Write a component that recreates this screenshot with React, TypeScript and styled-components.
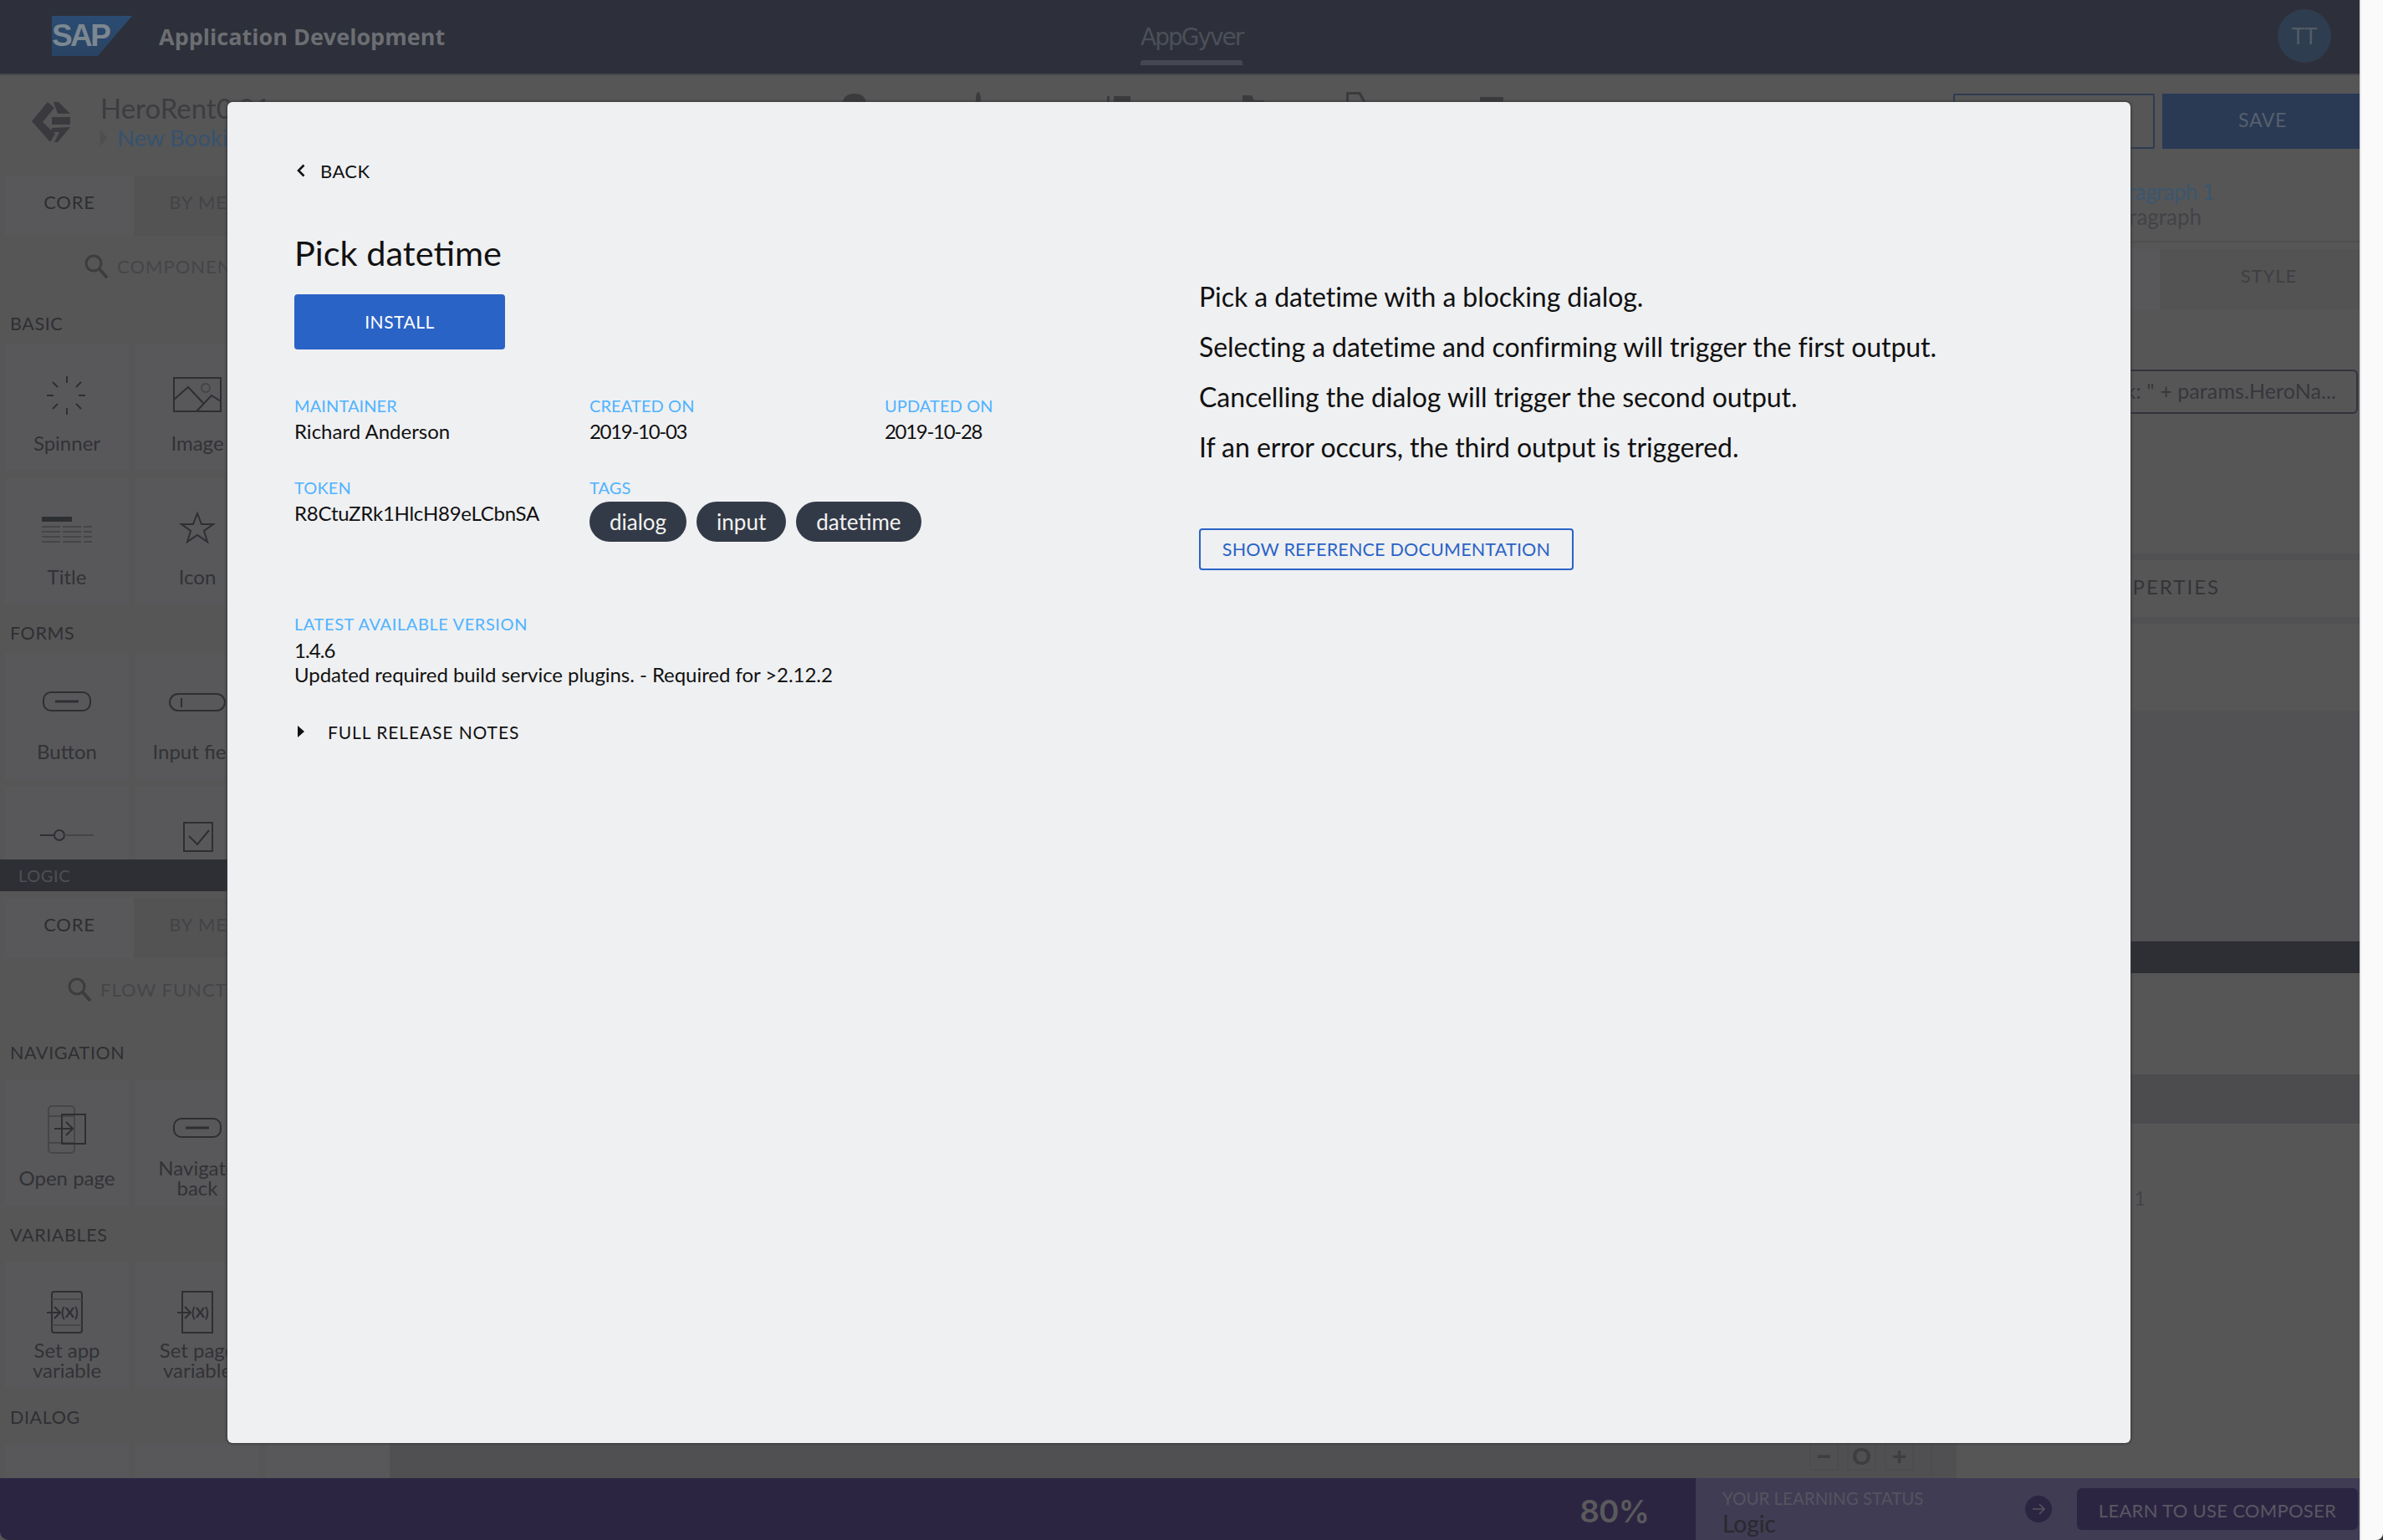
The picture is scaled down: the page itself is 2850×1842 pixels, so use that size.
import styled, { createGlobalStyle } from 'styled-components';

const GlobalStyle = createGlobalStyle`
  html, body {
    margin: 0;
    padding: 0;
    background: #333;
  }

  * {
    box-sizing: border-box;
  }
`;

const Shell = styled.div`
  position: relative;
  display: flex;
  width: 2850px;
  height: 1842px;
  overflow: hidden;
  font-family: Lato, "Liberation Sans", sans-serif;
`;

const Main = styled.div`
  display: flex;
  flex-direction: column;
  width: 2822px;
  background: #565657;
`;

const ScrollStrip = styled.div`
  flex: 1;
  background: #fafafa;
  border-left: 2px solid #e6e6e6;
  border-bottom-right-radius: 8px;
`;

/* top bar */
const Header = styled.header`
  display: grid;
  grid-template-columns: 1302px auto 1fr;
  align-items: center;
  flex: 0 0 88px;
  padding: 0 34px 2px 62px;
  background: #2d303a;
  border-bottom: 2px solid #48484b;
`;

const HeaderBrand = styled.div`
  display: flex;
  align-items: center;
`;

const SapLogo = styled.div`
  display: flex;
  align-items: center;
  width: 96px;
  height: 48px;
  background: linear-gradient(180deg, #2b4c72, #294363);
  clip-path: polygon(0 0, 100% 0, 57% 100%, 0 100%);
  color: #7c8791;
  font-family: "Liberation Sans", sans-serif;
  font-size: 37px;
  font-weight: 700;
  letter-spacing: -2.6px;
`;

const ProductName = styled.div`
  margin-left: 32px;
  color: #6c6e73;
  font-family: "Open Sans", sans-serif;
  font-size: 27px;
  font-weight: 700;
`;

const HeaderTab = styled.div`
  position: relative;
  display: flex;
  justify-content: center;
  align-items: center;
  height: 86px;
  padding-top: 2px;
  color: #4c4f59;
  font-family: "DejaVu Sans", sans-serif;
  font-size: 28px;
  letter-spacing: -2px;

  &::after {
    content: '';
    position: absolute;
    left: 0;
    right: 0;
    top: 72px;
    height: 6px;
    border-radius: 3px 3px 0 0;
    background: #454853;
  }
`;

const Avatar = styled.div`
  display: flex;
  justify-content: center;
  align-items: center;
  justify-self: end;
  width: 64px;
  height: 64px;
  border-radius: 50%;
  background: #2e3d4f;
  color: #525c66;
  font-size: 26px;
`;

/* project toolbar */
const Toolbar = styled.div`
  display: flex;
  flex: 0 0 112px;
`;

const Brand = styled.div`
  display: flex;
  flex: 0 0 1008px;
  padding: 32px 0 0 38px;
`;

const BrandText = styled.div`
  margin: -11px 0 0 36px;
`;

const BrandName = styled.div`
  color: #3c3c40;
  font-size: 33px;
  line-height: 36px;
`;

const Breadcrumb = styled.div`
  display: flex;
  align-items: center;
  gap: 12px;
  margin-top: 3px;
  color: #36526e;
  font-size: 27.5px;
  line-height: 30px;

  &::before {
    content: '';
    border-left: 8px solid #4e4e50;
    border-top: 10px solid transparent;
    border-bottom: 10px solid transparent;
  }
`;

const ToolIcon = styled.svg<{ $gap: number }>`
  flex: none;
  width: 40px;
  height: 30px;
  margin: 20px 0 0 ${props => props.$gap}px;
  fill: #3b3b3e;
`;

const Actions = styled.div`
  display: flex;
  gap: 9px;
  margin: 22px 0 0 auto;
  height: 66px;
`;

const OutlineAction = styled.div`
  width: 241px;
  border: 2px solid #2e3a50;
  border-radius: 2px;
`;

const SaveAction = styled.div`
  display: flex;
  justify-content: center;
  align-items: center;
  width: 236px;
  padding: 0 0 5px 4px;
  background: #2a3a55;
  color: #56606c;
  font-size: 23px;
  letter-spacing: 0.6px;
`;

/* work area */
const Panes = styled.div`
  display: flex;
  flex: 1;
  min-height: 0;
`;

const Sidebar = styled.aside`
  display: flex;
  flex-direction: column;
  flex: 0 0 466px;
`;

const SidebarSection = styled.section<{ $height?: number }>`
  flex: ${props => (props.$height ? `0 0 ${props.$height}px` : '1')};
  min-height: 0;
  padding: 8px 0 0 6px;
  overflow: hidden;
`;

const Tabs = styled.div`
  display: flex;
  height: 72px;
`;

const Tab = styled.div<{ $active?: boolean }>`
  display: flex;
  justify-content: center;
  align-items: center;
  width: 154px;
  padding-bottom: 10px;
  background: ${props => (props.$active ? '#58585a' : '#535354')};
  color: ${props => (props.$active ? '#2e2e30' : '#434346')};
  font-size: 22px;
  letter-spacing: 0.8px;
`;

const SearchRow = styled.div<{ $inset: number; $height: number }>`
  display: flex;
  align-items: center;
  gap: 10px;
  height: ${props => props.$height}px;
  padding-left: ${props => props.$inset}px;
  color: #454548;
  font-size: 22px;
  letter-spacing: 1px;
  white-space: nowrap;
`;

const SectionLabel = styled.div<{ $height: number; $top: number }>`
  height: ${props => props.$height}px;
  padding: ${props => props.$top}px 0 0 6px;
  color: #2f2f32;
  font-size: 21.5px;
  line-height: 20px;
  letter-spacing: 0.6px;
`;

const TileGrid = styled.div`
  display: grid;
  grid-template-columns: repeat(3, 148px);
  gap: 9px 8px;
`;

const Tile = styled.div`
  display: flex;
  flex-direction: column;
  align-items: center;
  height: 151px;
  padding-top: 24px;
  background: #58585a;
`;

const TileIcon = styled.svg`
  flex: 0 0 70px;
  width: 100px;
  fill: none;
  stroke: #2e2f33;
  stroke-width: 2;
`;

const TileText = styled.div`
  display: flex;
  align-items: center;
  height: 52px;
  margin-top: -2px;
  color: #323236;
  font-size: 24px;
  line-height: 24px;
  text-align: center;
  white-space: pre-line;
`;

const LogicBar = styled.div`
  flex: 0 0 38px;
  padding-left: 22px;
  background: #2e2f35;
  color: #4e4f54;
  font-size: 20px;
  line-height: 38px;
  letter-spacing: 0.6px;
`;

const Canvas = styled.main`
  display: flex;
  flex: 1;
  justify-content: flex-end;
  align-items: flex-end;
  background: #505052;
  padding-bottom: 1px;
`;

const ZoomControls = styled.div`
  display: flex;
  gap: 10px;
  margin-right: 29px;
  padding: 0 20px 8px 0;
  border-right: 2px solid #4c4c4e;
`;

const ZoomButton = styled.div`
  display: flex;
  justify-content: center;
  align-items: center;
  width: 35px;
  height: 70px;
  padding-top: 36px;
  border: 2px solid #4c4c4e;
  color: #3e3e40;
  font-family: "Liberation Sans", sans-serif;
  font-size: 30px;
  font-weight: 700;
`;

const Inspector = styled.aside`
  display: flex;
  flex-direction: column;
  flex: 0 0 482px;
`;

const InspectorHead = styled.div`
  flex: 0 0 88px;
  padding: 12px 0 0 178px;
  border-bottom: 2px solid #4f4f51;
  color: #434346;
  font-size: 26px;
  line-height: 30px;
`;

const InspectorLink = styled.div`
  color: #3b566e;
  letter-spacing: -0.6px;
`;

const InspectorTabs = styled.div`
  display: flex;
  flex: 0 0 72px;
  margin-top: 8px;
`;

const InspectorTab = styled.div<{ $active?: boolean }>`
  display: flex;
  flex: 0 0 ${props => (props.$active ? 243 : 239)}px;
  justify-content: center;
  align-items: center;
  padding: 0 0 10px 22px;
  background: ${props => (props.$active ? '#58585a' : '#535354')};
  color: #3f3f42;
  font-size: 22px;
  letter-spacing: 1px;
`;

const BindingInput = styled.div`
  display: flex;
  justify-content: flex-end;
  align-items: center;
  flex: 0 0 53px;
  margin: 72px 2px 0 0;
  padding: 0 24px 3px 0;
  border: 2px solid #33343c;
  border-radius: 6px;
  color: #36373b;
  font-size: 25px;
  letter-spacing: 0.1px;
  white-space: nowrap;
`;

const FieldNote = styled.div<{ $height: number }>`
  display: flex;
  flex: 0 0 ${props => props.$height}px;
  align-items: center;
  padding-left: 100px;
  color: #444447;
  font-size: 24px;
`;

const PanelHeading = styled.div`
  display: flex;
  align-items: center;
  flex: 0 0 84px;
  padding: 0 0 5px 156px;
  border-top: 8px solid #515153;
  border-bottom: 8px solid #515153;
  color: #343438;
  font-size: 24px;
  letter-spacing: 2px;
`;

const DarkerArea = styled.div`
  flex: 0 0 276px;
  margin-top: 104px;
  background: #525254;
`;

const PanelBar = styled.div<{ $height: number; $color: string }>`
  flex: 0 0 ${props => props.$height}px;
  background: ${props => props.$color};
`;

/* bottom bar */
const Footer = styled.footer`
  display: flex;
  flex: 0 0 74px;
  background: #2c2542;
  border-bottom-left-radius: 10px;
`;

const Progress = styled.div`
  flex: 0 0 2028px;
  padding: 15px 56px 0 0;
  color: #5a5a5c;
  font-family: Inter, sans-serif;
  font-size: 37px;
  font-weight: 600;
  line-height: 50px;
  letter-spacing: -0.8px;
  text-align: right;
`;

const Learning = styled.div`
  display: flex;
  flex: 1;
  align-items: center;
  padding: 0 2px 0 32px;
  background: #403c54;
`;

const LearningStatus = styled.div`
  flex: 1;
  padding-top: 7px;
`;

const LearningLabel = styled.div`
  color: #55545f;
  font-size: 20.5px;
  line-height: 26px;
`;

const LearningValue = styled.div`
  color: #29292d;
  font-size: 28px;
  line-height: 34px;
`;

const ArrowButton = styled.div`
  display: flex;
  justify-content: center;
  align-items: center;
  width: 32px;
  height: 32px;
  margin-right: 30px;
  border-radius: 50%;
  background: #2c2542;
  color: #55545f;
`;

const LearnButton = styled.div`
  display: flex;
  justify-content: center;
  align-items: center;
  width: 336px;
  height: 50px;
  padding-top: 2px;
  border-radius: 6px;
  background: #2c2542;
  color: #5a5862;
  font-size: 22px;
  letter-spacing: 0.3px;
`;

/* modal */
const Modal = styled.div`
  position: absolute;
  left: 272px;
  top: 122px;
  display: grid;
  grid-template-columns: 1082px 1fr;
  width: 2276px;
  height: 1604px;
  padding: 70px 0 0 80px;
  background: #eff0f2;
  border-radius: 6px;
  box-shadow: 0 0 3px 1px #38383a;
  color: #111;
`;

const BackLink = styled.div`
  display: flex;
  align-items: center;
  gap: 18px;
  height: 24px;
  padding-left: 3px;
  font-size: 22px;
  letter-spacing: 0.4px;
`;

const Title = styled.h1`
  margin: 62px 0 26px;
  font-size: 41.5px;
  font-weight: 400;
  line-height: 48px;
`;

const InstallButton = styled.button`
  display: block;
  width: 252px;
  height: 66px;
  padding: 0 0 2px;
  border: 0;
  border-radius: 4px;
  background: #2a63c6;
  color: #fff;
  font-family: inherit;
  font-size: 21px;
  letter-spacing: 0.5px;
`;

const MetaGrid = styled.div`
  display: grid;
  grid-template-columns: repeat(3, 353px);
  row-gap: 45px;
  margin-top: 57px;
`;

const MetaLabel = styled.div`
  margin-bottom: 9px;
  color: #4fb3ff;
  font-size: 20px;
  line-height: 20px;
  letter-spacing: 0.1px;
`;

const MetaValue = styled.div<{ $spacing?: number }>`
  font-size: 24px;
  line-height: 24px;
  letter-spacing: ${props => props.$spacing ?? 0}px;
`;

const TagList = styled.div`
  display: flex;
  gap: 12px;
  margin-top: -2px;
`;

const Tag = styled.span`
  display: flex;
  align-items: center;
  height: 48px;
  padding: 0 24px;
  border-radius: 24px;
  background: #333a47;
  color: #f2f2f2;
  font-size: 26px;
`;

const VersionBlock = styled.div`
  margin-top: 88px;
`;

const VersionLabel = styled(MetaLabel)`
  margin-bottom: 7px;
  letter-spacing: 0.6px;
`;

const VersionNumber = styled.div`
  font-size: 24px;
  line-height: 29px;
  letter-spacing: -0.9px;
`;

const VersionLine = styled.div`
  font-size: 24px;
  line-height: 29px;
  letter-spacing: -0.05px;
`;

const ReleaseNotes = styled.div`
  display: flex;
  align-items: center;
  height: 24px;
  margin-top: 42px;
  padding-left: 4px;
  font-size: 21px;
  letter-spacing: 0.9px;

  &::before {
    content: '';
    margin-right: 28px;
    border-left: 8px solid #111;
    border-top: 7px solid transparent;
    border-bottom: 7px solid transparent;
  }
`;

const Description = styled.div`
  padding-top: 143px;
`;

const DescriptionLine = styled.p`
  margin: 0 0 20px;
  font-size: 32px;
  line-height: 40px;
  letter-spacing: -0.06px;
`;

const DocsButton = styled.button`
  display: block;
  width: 448px;
  height: 50px;
  margin-top: 77px;
  border: 2px solid #2a63c6;
  border-radius: 4px;
  background: transparent;
  color: #2a63c6;
  font-family: inherit;
  font-size: 21.5px;
  letter-spacing: 0.2px;
`;

const toolIcons = [
  { gap: 0, shape: 'M0 14C0 6 6 2 14 2s14 4 14 12v16h-6l-8-14-8 14H0z' },
  { gap: 102, shape: 'M17 8c0-5 2-8 3-8s3 3 3 8v8h6v8H11v-8h6z' },
  { gap: 132, shape: 'M2 5h3v7H2zM10 5h20v7H10z' },
  { gap: 124, shape: 'M0 14V4h11l3 6h12v20H0z' },
  { gap: 84, shape: 'M0 0h17l10 18v12H0zM3 3v24h21v-8L15 3z' },
  { gap: 120, shape: 'M0 6h28v24H0zM3 14v6h22v-6z' },
];

const ComposerLogo = () => (
  <svg width="46" height="48" viewBox="0 0 46 48" fill="#3a3a3e">
    <path d="M19 0 0 23l22 25 6-10-15-14L27 7z" />
    <path d="M26 0h6l14 14H31z" />
    <path d="M24 18h22v9H24z" />
    <path d="M46 30 31 48h-4l6-12h-9v-5z" />
  </svg>
);

const PillIcon = () => (
  <TileIcon viewBox="0 0 100 70">
    <rect x="22" y="23" width="56" height="22" rx="9" />
    <path d="M36 34h28" strokeWidth="3" />
  </TileIcon>
);

const icons: Record<string, React.ReactNode> = {
  spinner: (
    <TileIcon viewBox="0 0 100 70">
      <path d="M50 14v8M50 52v8M26 37h8M64 37h8M33 21l6 6M67 21l-6 6M33 53l6-6M67 53l-6-6" />
    </TileIcon>
  ),
  image: (
    <TileIcon viewBox="0 0 100 70">
      <rect x="22" y="16" width="56" height="40" />
      <path d="M22 42l17-15 18 19M49 56l18-19 11 7" />
      <circle cx="60" cy="28" r="5" stroke="#454548" />
    </TileIcon>
  ),
  title: (
    <TileIcon viewBox="0 0 100 70">
      <rect x="20" y="22" width="36" height="6" fill="#2e2f33" stroke="none" />
      <path
        d="M20 34h60M20 40h60M20 46h60M20 52h60"
        stroke="#454548"
        strokeDasharray="22 3"
      />
    </TileIcon>
  ),
  star: (
    <TileIcon viewBox="0 0 100 70">
      <path d="M50 18l5 13h14l-11 8 4 13-12-8-12 8 4-13-11-8h14z" />
    </TileIcon>
  ),
  input: (
    <TileIcon viewBox="0 0 100 70">
      <rect x="17" y="25" width="66" height="20" rx="10" />
      <path d="M31 30v11" />
    </TileIcon>
  ),
  slider: (
    <TileIcon viewBox="0 0 100 70">
      <path d="M18 34h17" />
      <circle cx="41" cy="34" r="6" />
      <path d="M47 34h35" stroke="#464648" />
    </TileIcon>
  ),
  check: (
    <TileIcon viewBox="0 0 100 70">
      <rect x="34" y="19" width="34" height="34" />
      <path d="M40 35l10 10 14-17" />
    </TileIcon>
  ),
  openPage: (
    <TileIcon viewBox="0 0 100 70">
      <rect x="28" y="8" width="31" height="56" rx="4" stroke="#464648" />
      <path d="M28 20h31M28 52h31" stroke="#464648" />
      <rect x="44" y="18" width="28" height="35" />
      <path d="M35 35h21M49 27l8 8-8 8" />
    </TileIcon>
  ),
  appVar: (
    <TileIcon viewBox="0 0 100 70">
      <rect x="32" y="12" width="36" height="49" rx="3" />
      <path d="M32 21h36M32 52h36" stroke="#464648" />
      <path d="M26 37h15M35 30l7 7-7 7" />
      <text x="43" y="43" fill="#2e2f33" stroke="none" fontSize="17" fontWeight="700">(X)</text>
    </TileIcon>
  ),
  pageVar: (
    <TileIcon viewBox="0 0 100 70">
      <rect x="32" y="12" width="36" height="49" />
      <path d="M26 37h15M35 30l7 7-7 7" />
      <text x="43" y="43" fill="#2e2f33" stroke="none" fontSize="17" fontWeight="700">(X)</text>
    </TileIcon>
  ),
};

const SearchGlyph = () => (
  <svg width="30" height="30" viewBox="0 0 30 30" fill="none" stroke="#3d3d40" strokeWidth="3">
    <circle cx="12" cy="12" r="9" />
    <path d="M19 19l9 10" strokeWidth="4" />
  </svg>
);

export default function App() {
  return (
    <>
      <GlobalStyle />
      <Shell>
        <Main>
          <Header>
            <HeaderBrand>
              <SapLogo>SAP</SapLogo>
              <ProductName>Application Development</ProductName>
            </HeaderBrand>
            <HeaderTab>AppGyver</HeaderTab>
            <Avatar>TT</Avatar>
          </Header>

          <Toolbar>
            <Brand>
              <ComposerLogo />
              <BrandText>
                <BrandName>HeroRent0.01</BrandName>
                <Breadcrumb>New Booking</Breadcrumb>
              </BrandText>
            </Brand>
            {toolIcons.map((tool, i) => (
              <ToolIcon key={i} $gap={tool.gap} viewBox="0 0 40 30">
                <path d={tool.shape} fillRule="evenodd" />
              </ToolIcon>
            ))}
            <Actions>
              <OutlineAction />
              <SaveAction>SAVE</SaveAction>
            </Actions>
          </Toolbar>

          <Panes>
            <Sidebar>
              <SidebarSection $height={826}>
                <Tabs>
                  <Tab $active>CORE</Tab>
                  <Tab>BY ME</Tab>
                </Tabs>
                <SearchRow $inset={94} $height={72}>
                  <SearchGlyph />
                  COMPONENT LIBRARY
                </SearchRow>
                <SectionLabel $height={58} $top={23}>BASIC</SectionLabel>
                <TileGrid>
                  <Tile>{icons.spinner}<TileText>Spinner</TileText></Tile>
                  <Tile>{icons.image}<TileText>Image</TileText></Tile>
                  <Tile />
                  <Tile>{icons.title}<TileText>Title</TileText></Tile>
                  <Tile>{icons.star}<TileText>Icon</TileText></Tile>
                </TileGrid>
                <SectionLabel $height={58} $top={24}>FORMS</SectionLabel>
                <TileGrid>
                  <Tile><PillIcon /><TileText>Button</TileText></Tile>
                  <Tile>{icons.input}<TileText>Input field</TileText></Tile>
                  <Tile />
                  <Tile>{icons.slider}</Tile>
                  <Tile>{icons.check}</Tile>
                </TileGrid>
              </SidebarSection>
              <LogicBar>LOGIC</LogicBar>
              <SidebarSection>
                <Tabs>
                  <Tab $active>CORE</Tab>
                  <Tab>BY ME</Tab>
                </Tabs>
                <SearchRow $inset={74} $height={74}>
                  <SearchGlyph />
                  FLOW FUNCTIONS
                </SearchRow>
                <SectionLabel $height={71} $top={29}>NAVIGATION</SectionLabel>
                <TileGrid>
                  <Tile>{icons.openPage}<TileText>Open page</TileText></Tile>
                  <Tile><PillIcon /><TileText>{'Navigate\nback'}</TileText></Tile>
                  <Tile />
                </TileGrid>
                <SectionLabel $height={67} $top={25}>VARIABLES</SectionLabel>
                <TileGrid>
                  <Tile>{icons.appVar}<TileText>{'Set app\nvariable'}</TileText></Tile>
                  <Tile>{icons.pageVar}<TileText>{'Set page\nvariable'}</TileText></Tile>
                  <Tile />
                </TileGrid>
                <SectionLabel $height={67} $top={25}>DIALOG</SectionLabel>
                <TileGrid>
                  <Tile />
                  <Tile><PillIcon /></Tile>
                  <Tile><PillIcon /></Tile>
                </TileGrid>
              </SidebarSection>
            </Sidebar>

            <Canvas>
              <ZoomControls>
                <ZoomButton>−</ZoomButton>
                <ZoomButton>O</ZoomButton>
                <ZoomButton>+</ZoomButton>
              </ZoomControls>
            </Canvas>

            <Inspector>
              <InspectorHead>
                <InspectorLink>Paragraph 1</InspectorLink>
                Paragraph
              </InspectorHead>
              <InspectorTabs>
                <InspectorTab $active />
                <InspectorTab>STYLE</InspectorTab>
              </InspectorTabs>
              <BindingInput>"Book: " + params.HeroNa...</BindingInput>
              <FieldNote $height={167}>Advanced</FieldNote>
              <PanelHeading>PROPERTIES</PanelHeading>
              <DarkerArea />
              <PanelBar $height={38} $color="#2e2f35" />
              <PanelBar $height={121} $color="#565657" />
              <PanelBar $height={59} $color="#4c4c4e" />
              <FieldNote $height={176}>Paragraph 1</FieldNote>
            </Inspector>
          </Panes>

          <Footer>
            <Progress>80%</Progress>
            <Learning>
              <LearningStatus>
                <LearningLabel>YOUR LEARNING STATUS</LearningLabel>
                <LearningValue>Logic</LearningValue>
              </LearningStatus>
              <ArrowButton>
                <svg width="18" height="18" viewBox="0 0 18 18" fill="none" stroke="currentColor" strokeWidth="1.5">
                  <path d="M2 9h14M10 3l6 6-6 6" />
                </svg>
              </ArrowButton>
              <LearnButton>LEARN TO USE COMPOSER</LearnButton>
            </Learning>
          </Footer>
        </Main>
        <ScrollStrip />

        <Modal>
          <div>
            <BackLink>
              <svg width="10" height="16" viewBox="0 0 10 16" fill="none" stroke="#111" strokeWidth="2.6">
                <path d="M8.5 1.5 2 8l6.5 6.5" />
              </svg>
              BACK
            </BackLink>
            <Title>Pick datetime</Title>
            <InstallButton>INSTALL</InstallButton>
            <MetaGrid>
              <div>
                <MetaLabel>MAINTAINER</MetaLabel>
                <MetaValue>Richard Anderson</MetaValue>
              </div>
              <div>
                <MetaLabel>CREATED ON</MetaLabel>
                <MetaValue $spacing={-1.3}>2019-10-03</MetaValue>
              </div>
              <div>
                <MetaLabel>UPDATED ON</MetaLabel>
                <MetaValue $spacing={-1.3}>2019-10-28</MetaValue>
              </div>
              <div>
                <MetaLabel>TOKEN</MetaLabel>
                <MetaValue $spacing={-0.25}>R8CtuZRk1HlcH89eLCbnSA</MetaValue>
              </div>
              <div>
                <MetaLabel>TAGS</MetaLabel>
                <TagList>
                  <Tag>dialog</Tag>
                  <Tag>input</Tag>
                  <Tag>datetime</Tag>
                </TagList>
              </div>
            </MetaGrid>
            <VersionBlock>
              <VersionLabel>LATEST AVAILABLE VERSION</VersionLabel>
              <VersionNumber>1.4.6</VersionNumber>
              <VersionLine>Updated required build service plugins. - Required for &gt;2.12.2</VersionLine>
            </VersionBlock>
            <ReleaseNotes>FULL RELEASE NOTES</ReleaseNotes>
          </div>
          <Description>
            <DescriptionLine>Pick a datetime with a blocking dialog.</DescriptionLine>
            <DescriptionLine>Selecting a datetime and confirming will trigger the first output.</DescriptionLine>
            <DescriptionLine>Cancelling the dialog will trigger the second output.</DescriptionLine>
            <DescriptionLine>If an error occurs, the third output is triggered.</DescriptionLine>
            <DocsButton>SHOW REFERENCE DOCUMENTATION</DocsButton>
          </Description>
        </Modal>
      </Shell>
    </>
  );
}
